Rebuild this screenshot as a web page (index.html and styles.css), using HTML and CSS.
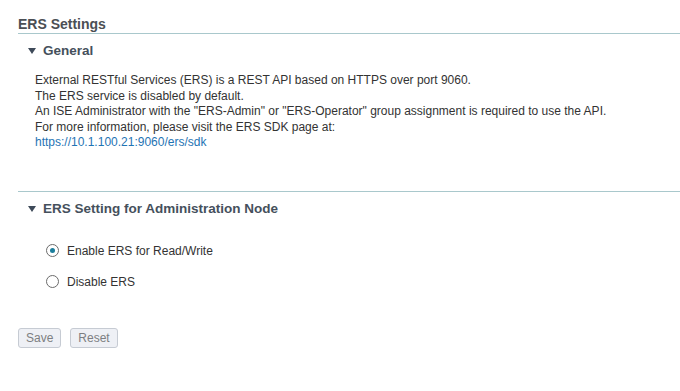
FILE: index.html
```html
<!DOCTYPE html>
<html>
    <head>
        <title>ERS Settings</title>
        <link rel="stylesheet" href="styles.css">
    </head>
    <body>
        <div class="page">
            <h1 class="pageTitle">ERS Settings</h1>

            <div class="section">
                <h2 class="sectionHead"><span class="caret"></span>General</h2>
                <div class="sectionBody info">
                    <p>External RESTful Services (ERS) is a REST API based on HTTPS over port 9060.</p>
                    <p>The ERS service is disabled by default.</p>
                    <p>An ISE Administrator with the "ERS-Admin" or "ERS-Operator" group assignment is required to use the API.</p>
                    <p>For more information, please visit the ERS SDK page at:</p>
                    <p><a href="#" class="link">https://10.1.100.21:9060/ers/sdk</a></p>
                </div>
            </div>

            <div class="section second">
                <h2 class="sectionHead"><span class="caret"></span>ERS Setting for Administration Node</h2>
                <div class="sectionBody options">
                    <label class="radioRow">
                        <span class="radio checked"></span>
                        Enable ERS for Read/Write
                    </label>
                    <label class="radioRow">
                        <span class="radio"></span>
                        Disable ERS
                    </label>
                </div>
            </div>

            <div class="buttons">
                <button class="btn">Save</button>
                <button class="btn">Reset</button>
            </div>
        </div>
    </body>
</html>
```

FILE: styles.css
```css
body{
    margin: 0;
    background-color: #ffffff;
    font-family: Arial, "Liberation Sans", sans-serif;
    font-size: 12px;
    color: #333333;
}

.page{
    padding: 16px 0 0 18px;
}

.pageTitle{
    margin: 0;
    padding-bottom: 1px;
    font-family: Arial, "Liberation Sans", sans-serif;
    font-size: 14px;
    font-weight: bold;
    color: #4b4f54;
    border-bottom: 1px solid #a9c8cc;
}

.sectionHead{
    margin: 0;
    padding: 9px 0 0 10px;
    font-family: Arial, "Liberation Sans", sans-serif;
    font-size: 13.5px;
    font-weight: bold;
    color: #45505c;
    display: flex;
    align-items: center;
}

.caret{
    width: 0;
    height: 0;
    border-left: 4px solid transparent;
    border-right: 4px solid transparent;
    border-top: 6px solid #3e4a59;
    margin-right: 7px;
}

.info{
    padding: 15px 0 0 17px;
    height: 118px;
}

.info p{
    margin: 0;
    line-height: 15.5px;
}

.link{
    color: #1f74b4;
    text-decoration: none;
}

.second{
    border-top: 1px solid #a9c8cc;
}

.second .sectionHead{
    padding-top: 9px;
}

.options{
    padding: 26px 0 0 28px;
    height: 86px;
}

.radioRow{
    display: flex;
    align-items: center;
    height: 17px;
    margin-bottom: 14px;
    font-size: 12px;
    color: #333333;
}

.radio{
    width: 11px;
    height: 11px;
    border: 1px solid #6b6b6b;
    border-radius: 50%;
    margin-right: 8px;
    display: flex;
    align-items: center;
    justify-content: center;
}

.radio.checked::after{
    content: "";
    width: 5px;
    height: 5px;
    border-radius: 50%;
    background-color: #1b7e9c;
}

.buttons{
    display: flex;
    gap: 9px;
}

.btn{
    height: 20px;
    padding: 0 7px;
    font-family: Arial, "Liberation Sans", sans-serif;
    font-size: 12px;
    color: #7d7f82;
    background-color: #eef0f5;
    border: 1px solid #c6cbd3;
    border-radius: 3px;
}
```
